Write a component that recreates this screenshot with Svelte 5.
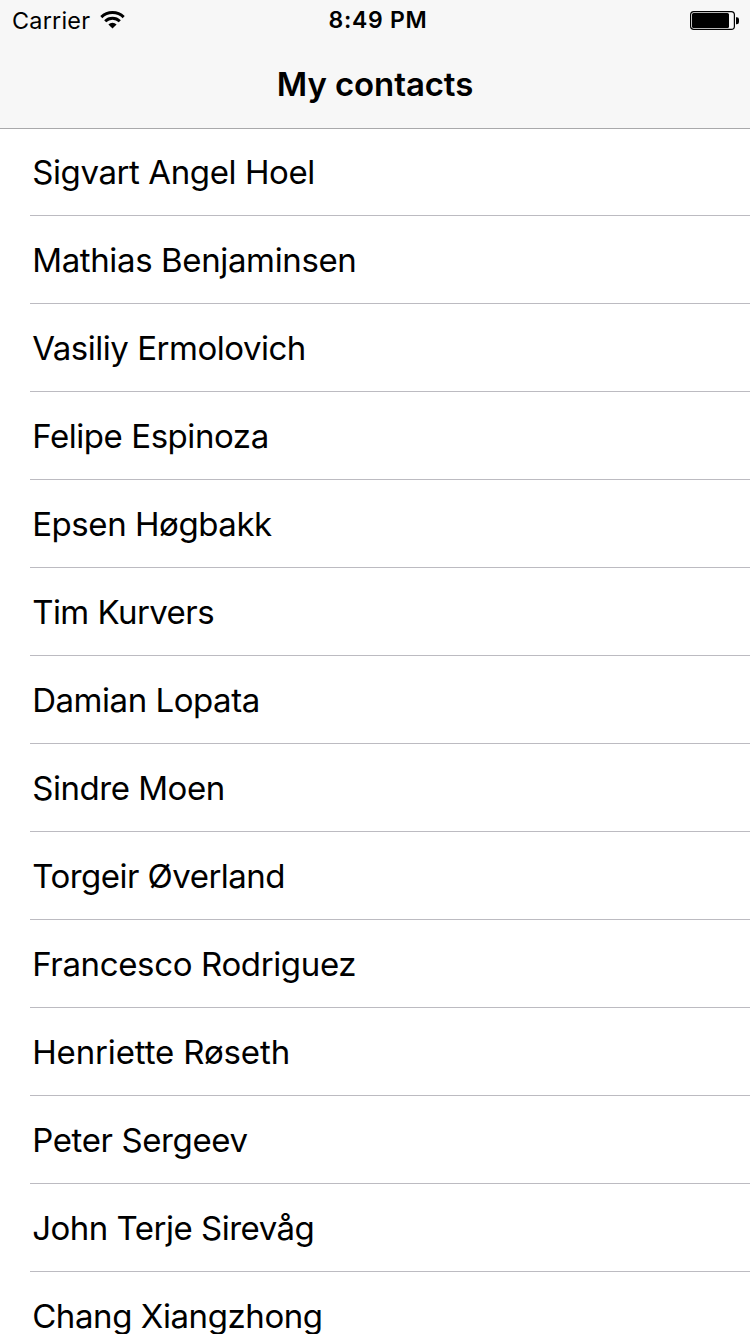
<script>
  const contacts = [
    { name: 'Sigvart Angel Hoel', tracking: -0.4 },
    { name: 'Mathias Benjaminsen', tracking: -0.37 },
    { name: 'Vasiliy Ermolovich', tracking: -0.48 },
    { name: 'Felipe Espinoza', tracking: -0.44 },
    { name: 'Epsen Høgbakk', tracking: -0.44 },
    { name: 'Tim Kurvers', tracking: -0.56 },
    { name: 'Damian Lopata', tracking: -0.46 },
    { name: 'Sindre Moen', tracking: -0.46 },
    { name: 'Torgeir Øverland', tracking: -0.52 },
    { name: 'Francesco Rodriguez', tracking: -0.36 },
    { name: 'Henriette Røseth', tracking: -0.13 },
    { name: 'Peter Sergeev', tracking: -0.38 },
    { name: 'John Terje Sirevåg', tracking: -0.5 },
    { name: 'Chang Xiangzhong', tracking: -0.42 },
  ];
</script>

<div class="screen">
  <header>
    <div class="status">
      <div class="left">
        <span class="carrier">Carrier</span>
        <svg width="25" height="18" viewBox="0 0 25 18">
          <g fill="none" stroke="#000" stroke-width="2.9">
            <path d="M1.3 6.1a16 16 0 0 1 22.4 0" />
            <path d="M5.2 10.3a10.4 10.4 0 0 1 14.6 0" />
          </g>
          <path d="M12.5 17.6l-4.1-4.2a5.9 5.9 0 0 1 8.2 0z" />
        </svg>
      </div>
      <div class="time">8:49 PM</div>
      <div class="right">
        <svg width="50" height="20" viewBox="0 0 50 20">
          <rect x=".6" y=".6" width="43.8" height="17.8" rx="3.2" fill="none" stroke="#000" stroke-width="1.2" />
          <rect x="2" y="2" width="37" height="15" rx="1.5" />
          <path d="M46 6.2h.8a2.2 2.2 0 0 1 2.2 2.2v2.7a2.2 2.2 0 0 1-2.2 2.2H46z" />
        </svg>
      </div>
    </div>
    <h1>My contacts</h1>
  </header>
  <ul>
    {#each contacts as { name, tracking }}
      <li style:letter-spacing="{tracking}px">{name}</li>
    {/each}
  </ul>
</div>

<style>
  :global(body) { background: #fff; overflow: hidden; }
  .screen { height: 1334px; overflow: hidden; font-family: Inter, sans-serif; color: #000; }
  header { height: 128px; background: #f7f7f7; border-bottom: 1px solid #a9a9ab; }
  .status { height: 40px; display: grid; grid-template-columns: 1fr auto 1fr; align-items: center; padding: 0 10px 0 12px; font-size: 24px; }
  .left { display: flex; align-items: center; gap: 10px; }
  .carrier { font-size: 23.4px; letter-spacing: 0.22px; }
  .right { display: flex; justify-content: flex-end; padding-top: 1px; }
  .time { padding-left: 4px; font-size: 23px; font-weight: 600; letter-spacing: 0.75px; }
  .right svg, .left svg { display: block; }
  h1 { margin: 0; height: 88px; line-height: 89px; text-align: center; font-size: 33px; font-weight: 600; letter-spacing: -0.1px; }
  ul { list-style: none; margin: 0; padding: 0 0 0 30px; }
  li { box-sizing: border-box; height: 88px; line-height: 88px; border-bottom: 1px solid #bcbbc1; font-size: 33px; padding-left: 2.2px; white-space: nowrap; }
  li:first-child { height: 87px; line-height: 86px; }
</style>
